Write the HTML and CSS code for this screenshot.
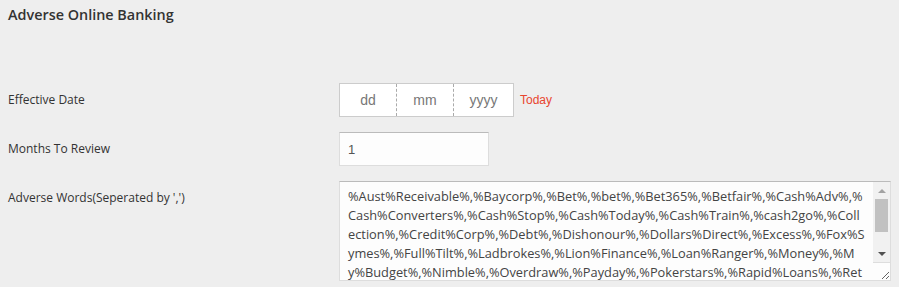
FILE: index.html
```html
<!DOCTYPE html>
<html>
<head>
<meta charset="utf-8">
<title>Adverse Online Banking</title>
<link rel="stylesheet" href="styles.css">
</head>
<body>
	<h3 class="title">Adverse Online Banking</h3>
	<div class="form">
		<div class="row">
			<label class="label">Effective Date</label>
			<div class="field">
				<div class="datebox">
					<input type="text" class="part" placeholder="dd">
					<input type="text" class="part" placeholder="mm">
					<input type="text" class="part year" placeholder="yyyy">
				</div>
				<a class="today">Today</a>
			</div>
		</div>
		<div class="row">
			<label class="label">Months To Review</label>
			<div class="field">
				<input type="text" class="months" value="1">
			</div>
		</div>
		<div class="row">
			<label class="label">Adverse Words(Seperated by ',')</label>
			<div class="field">
				<div class="wordsbox">
					<textarea class="words">%Aust%Receivable%,%Baycorp%,%Bet%,%bet%,%Bet365%,%Betfair%,%Cash%Adv%,%Cash%Converters%,%Cash%Stop%,%Cash%Today%,%Cash%Train%,%cash2go%,%Collection%,%Credit%Corp%,%Debt%,%Dishonour%,%Dollars%Direct%,%Excess%,%Fox%Symes%,%Full%Tilt%,%Ladbrokes%,%Lion%Finance%,%Loan%Ranger%,%Money%,%My%Budget%,%Nimble%,%Overdraw%,%Payday%,%Pokerstars%,%Rapid%Loans%,%Return%,%Sportsbet%,%Sportingbet%,%Tab%,%Tatts%,%Unibet%,%William%Hill%,%Wizard%</textarea>
					<!-- scrollbar drawn by hand, headless browser hides the real one -->
					<div class="vscroll">
						<div class="sbtn"><span class="arrow up"></span></div>
						<div class="strack"><div class="sthumb"></div></div>
						<div class="sbtn"><span class="arrow down"></span></div>
					</div>
				</div>
			</div>
		</div>
	</div>
</body>
</html>
```
FILE: styles.css
```css
body {
	margin: 0;
	background-color: #eeeeee;
	font-family: "Open Sans", "Liberation Sans", sans-serif;
	color: #333333;
}
.title {
	margin: 0;
	padding: 5px 8px 0 8px;
	height: 78px;
	font-size: 14.4px;
	font-weight: 600;
	color: #333333;
}
.form {
	display: flex;
	flex-direction: column;
	gap: 15px;
}
.row {
	display: flex;
}
.label {
	width: 339px;
	flex-shrink: 0;
	padding: 8px 0 0 8px;
	box-sizing: border-box;
	font-size: 12px;
}
.field {
	display: flex;
	align-items: center;
}
.datebox {
	display: flex;
	height: 34px;
	border: 1px solid #cccccc;
	background: #ffffff;
	box-sizing: border-box;
}
.part {
	width: 56px;
	border: none;
	border-right: 1px dashed #aaaaaa;
	background: transparent;
	text-align: center;
	font-family: "Liberation Sans", Arial, sans-serif;
	font-size: 14px;
	outline: none;
	padding: 0;
}
.part.year {
	width: 59px;
	border-right: none;
}
.part::placeholder {
	color: #777777;
}
.today {
	margin-left: 6px;
	color: #e8452e;
	font-family: "Liberation Sans", Arial, sans-serif;
	font-size: 12px;
}
.months {
	width: 150px;
	height: 34px;
	box-sizing: border-box;
	border: 1px solid #dddddd;
	border-top-color: #bbbbbb;
	background: #fdfdfd;
	padding: 0 8px;
	font-family: "Liberation Sans", Arial, sans-serif;
	font-size: 13px;
	color: #555555;
}
.wordsbox {
	position: relative;
	display: flex;
}
.words {
	width: 552px;
	height: 100px;
	box-sizing: border-box;
	border: 1px solid #dddddd;
	border-top-color: #bbbbbb;
	background: #fdfdfd;
	padding: 5px 24px 5px 8px;
	font-family: "Open Sans", sans-serif;
	font-size: 12.8px;
	line-height: 19px;
	color: #444444;
	word-break: break-all;
	overflow: hidden;
}
.vscroll {
	position: absolute;
	top: 1px;
	right: 1px;
	bottom: 18px;
	width: 17px;
	display: flex;
	flex-direction: column;
	background: #f1f1f1;
	border-bottom: 1px solid #dddddd;
}
.sbtn {
	height: 17px;
	display: flex;
	align-items: center;
	justify-content: center;
}
.arrow {
	width: 0;
	height: 0;
	border-left: 4px solid transparent;
	border-right: 4px solid transparent;
}
.arrow.up {
	border-bottom: 4px solid #a3a3a3;
}
.arrow.down {
	border-top: 4px solid #505050;
}
.strack {
	flex: 1;
	padding: 0 2px;
}
.sthumb {
	height: 33px;
	background: #c1c1c1;
}
```
